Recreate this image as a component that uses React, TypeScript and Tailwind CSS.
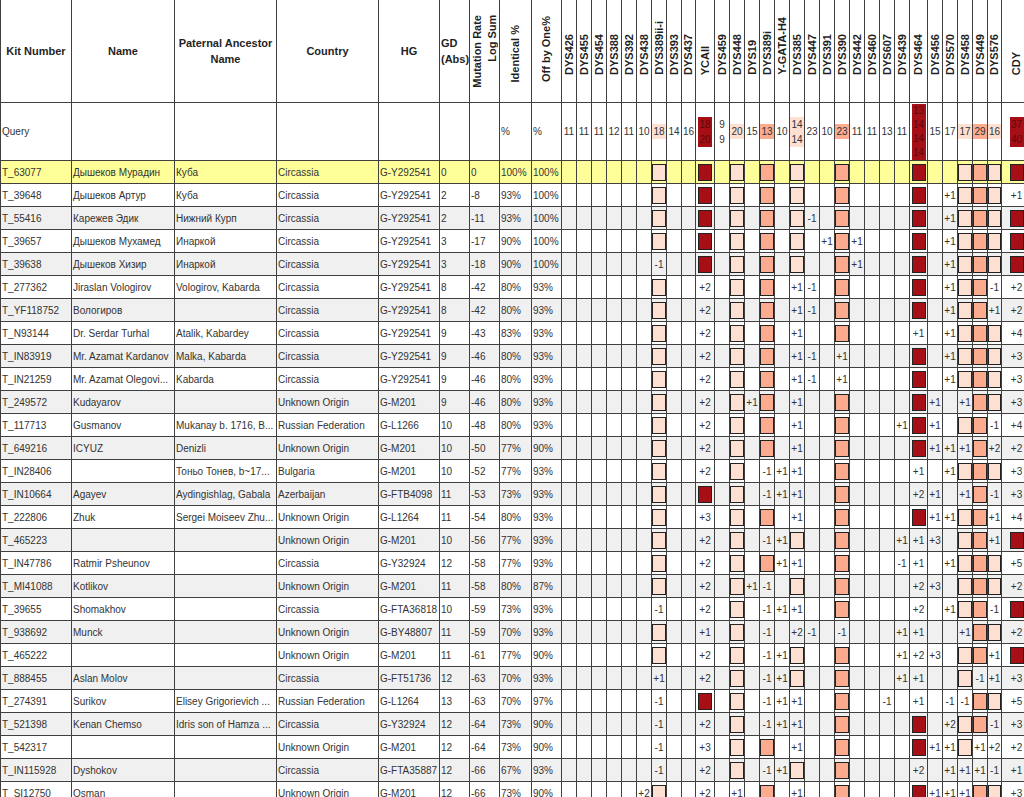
import React from 'react';

type Tone = 'L' | 'S' | 'D';

const TONE_BG: Record<Tone, string> = {
  L: 'bg-[#fee0d2]',
  S: 'bg-[#fcab8e]',
  D: 'bg-[#a50f15]',
};

type Marker = { name: string; w: string; q: string[]; tone?: Tone };

const MARKERS: Marker[] = [
  { name: 'DYS426', w: 'w-[15px]', q: ['11'] },
  { name: 'DYS455', w: 'w-[15px]', q: ['11'] },
  { name: 'DYS454', w: 'w-[15px]', q: ['11'] },
  { name: 'DYS388', w: 'w-[15px]', q: ['12'] },
  { name: 'DYS392', w: 'w-[15px]', q: ['11'] },
  { name: 'DYS438', w: 'w-[15px]', q: ['10'] },
  { name: 'DYS389ii-i', w: 'w-[15px]', q: ['18'], tone: 'L' },
  { name: 'DYS393', w: 'w-[15px]', q: ['14'] },
  { name: 'DYS437', w: 'w-[14px]', q: ['16'] },
  { name: 'YCAII', w: 'w-[19px]', q: ['18', '20'], tone: 'D' },
  { name: 'DYS459', w: 'w-[15px]', q: ['9', '9'] },
  { name: 'DYS448', w: 'w-[15px]', q: ['20'], tone: 'L' },
  { name: 'DYS19', w: 'w-[15px]', q: ['15'] },
  { name: 'DYS389i', w: 'w-[15px]', q: ['13'], tone: 'S' },
  { name: 'Y-GATA-H4', w: 'w-[15px]', q: ['10'] },
  { name: 'DYS385', w: 'w-[15px]', q: ['14', '14'], tone: 'L' },
  { name: 'DYS447', w: 'w-[15px]', q: ['23'] },
  { name: 'DYS391', w: 'w-[15px]', q: ['10'] },
  { name: 'DYS390', w: 'w-[15px]', q: ['23'], tone: 'S' },
  { name: 'DYS442', w: 'w-[15px]', q: ['11'] },
  { name: 'DYS460', w: 'w-[15px]', q: ['11'] },
  { name: 'DYS607', w: 'w-[15px]', q: ['13'] },
  { name: 'DYS439', w: 'w-[15px]', q: ['11'] },
  { name: 'DYS464', w: 'w-[18px]', q: ['13', '14', '14', '14'], tone: 'D' },
  { name: 'DYS456', w: 'w-[15px]', q: ['15'] },
  { name: 'DYS570', w: 'w-[15px]', q: ['17'] },
  { name: 'DYS458', w: 'w-[15px]', q: ['17'], tone: 'L' },
  { name: 'DYS449', w: 'w-[15px]', q: ['29'], tone: 'S' },
  { name: 'DYS576', w: 'w-[14px]', q: ['16'], tone: 'L' },
  { name: 'CDY', w: 'w-[30px]', q: ['37', '40'], tone: 'D' },
];

// markers that show a matching box unless the row says otherwise
const BASE = [6, 9, 11, 13, 15, 18, 23, 26, 27, 28, 29];

type Row = {
  kit: string;
  name: string;
  ancestor: string;
  country: string;
  hg: string;
  gd: string;
  mut: string;
  ident: string;
  off: string;
  diff: Record<number, string>;
};

const ROWS: Row[] = [
  { kit: 'T_63077', name: 'Дышеков Мурадин', ancestor: 'Куба', country: 'Circassia', hg: 'G-Y292541', gd: '0', mut: '0', ident: '100%', off: '100%', diff: {} },
  { kit: 'T_39648', name: 'Дышеков Артур', ancestor: 'Куба', country: 'Circassia', hg: 'G-Y292541', gd: '2', mut: '-8', ident: '93%', off: '100%', diff: { 25: '+1', 29: '+1' } },
  { kit: 'T_55416', name: 'Карежев Эдик', ancestor: 'Нижний Курп', country: 'Circassia', hg: 'G-Y292541', gd: '2', mut: '-11', ident: '93%', off: '100%', diff: { 16: '-1', 25: '+1' } },
  { kit: 'T_39657', name: 'Дышеков Мухамед', ancestor: 'Инаркой', country: 'Circassia', hg: 'G-Y292541', gd: '3', mut: '-17', ident: '90%', off: '100%', diff: { 17: '+1', 19: '+1', 25: '+1' } },
  { kit: 'T_39638', name: 'Дышеков Хизир', ancestor: 'Инаркой', country: 'Circassia', hg: 'G-Y292541', gd: '3', mut: '-18', ident: '90%', off: '100%', diff: { 6: '-1', 19: '+1', 25: '+1' } },
  { kit: 'T_277362', name: 'Jiraslan Vologirov', ancestor: 'Vologirov, Kabarda', country: 'Circassia', hg: 'G-Y292541', gd: '8', mut: '-42', ident: '80%', off: '93%', diff: { 9: '+2', 15: '+1', 16: '-1', 25: '+1', 28: '-1', 29: '+2' } },
  { kit: 'T_YF118752', name: 'Вологиров', ancestor: '', country: 'Circassia', hg: 'G-Y292541', gd: '8', mut: '-42', ident: '80%', off: '93%', diff: { 9: '+2', 15: '+1', 16: '-1', 25: '+1', 28: '+1', 29: '+2' } },
  { kit: 'T_N93144', name: 'Dr. Serdar Turhal', ancestor: 'Atalik, Kabardey', country: 'Circassia', hg: 'G-Y292541', gd: '9', mut: '-43', ident: '83%', off: '93%', diff: { 9: '+2', 15: '+1', 23: '+1', 25: '+1', 29: '+4' } },
  { kit: 'T_IN83919', name: 'Mr. Azamat Kardanov', ancestor: 'Malka, Kabarda', country: 'Circassia', hg: 'G-Y292541', gd: '9', mut: '-46', ident: '80%', off: '93%', diff: { 9: '+2', 15: '+1', 16: '-1', 18: '+1', 25: '+1', 29: '+3' } },
  { kit: 'T_IN21259', name: 'Mr. Azamat Olegovi...', ancestor: 'Kabarda', country: 'Circassia', hg: 'G-Y292541', gd: '9', mut: '-46', ident: '80%', off: '93%', diff: { 9: '+2', 15: '+1', 16: '-1', 18: '+1', 25: '+1', 29: '+3' } },
  { kit: 'T_249572', name: 'Kudayarov', ancestor: '', country: 'Unknown Origin', hg: 'G-M201', gd: '9', mut: '-46', ident: '80%', off: '93%', diff: { 9: '+2', 12: '+1', 15: '+1', 24: '+1', 26: '+1', 29: '+3' } },
  { kit: 'T_117713', name: 'Gusmanov', ancestor: 'Mukanay b. 1716, B...', country: 'Russian Federation', hg: 'G-L1266', gd: '10', mut: '-48', ident: '80%', off: '93%', diff: { 9: '+2', 15: '+1', 22: '+1', 24: '+1', 28: '-1', 29: '+4' } },
  { kit: 'T_649216', name: 'ICYUZ', ancestor: 'Denizli', country: 'Unknown Origin', hg: 'G-M201', gd: '10', mut: '-50', ident: '77%', off: '90%', diff: { 9: '+2', 15: '+1', 24: '+1', 25: '+1', 26: '+1', 28: '+2', 29: '+2' } },
  { kit: 'T_IN28406', name: '', ancestor: 'Тоньо Тонев, b~17...', country: 'Bulgaria', hg: 'G-M201', gd: '10', mut: '-52', ident: '77%', off: '93%', diff: { 9: '+2', 13: '-1', 14: '+1', 15: '+1', 23: '+1', 25: '+1', 29: '+3' } },
  { kit: 'T_IN10664', name: 'Agayev', ancestor: 'Aydingishlag, Gabala', country: 'Azerbaijan', hg: 'G-FTB4098', gd: '11', mut: '-53', ident: '73%', off: '93%', diff: { 13: '-1', 14: '+1', 15: '+1', 23: '+2', 24: '+1', 26: '+1', 28: '-1', 29: '+3' } },
  { kit: 'T_222806', name: 'Zhuk', ancestor: 'Sergei Moiseev Zhu...', country: 'Unknown Origin', hg: 'G-L1264', gd: '11', mut: '-54', ident: '80%', off: '93%', diff: { 9: '+3', 15: '+1', 24: '+1', 25: '+1', 28: '+1', 29: '+4' } },
  { kit: 'T_465223', name: '', ancestor: '', country: 'Unknown Origin', hg: 'G-M201', gd: '10', mut: '-56', ident: '77%', off: '93%', diff: { 9: '+2', 13: '-1', 14: '+1', 22: '+1', 23: '+1', 24: '+3', 28: '+1' } },
  { kit: 'T_IN47786', name: 'Ratmir Psheunov', ancestor: '', country: 'Circassia', hg: 'G-Y32924', gd: '12', mut: '-58', ident: '77%', off: '93%', diff: { 9: '+2', 14: '+1', 15: '+1', 22: '-1', 23: '+1', 25: '+1', 29: '+5' } },
  { kit: 'T_MI41088', name: 'Kotlikov', ancestor: '', country: 'Unknown Origin', hg: 'G-M201', gd: '11', mut: '-58', ident: '80%', off: '87%', diff: { 9: '+2', 12: '+1', 13: '-1', 23: '+2', 24: '+3', 29: '+2' } },
  { kit: 'T_39655', name: 'Shomakhov', ancestor: '', country: 'Circassia', hg: 'G-FTA36818', gd: '10', mut: '-59', ident: '73%', off: '93%', diff: { 6: '-1', 9: '+2', 13: '-1', 14: '+1', 15: '+1', 23: '+2', 25: '+1', 28: '-1' } },
  { kit: 'T_938692', name: 'Munck', ancestor: '', country: 'Unknown Origin', hg: 'G-BY48807', gd: '11', mut: '-59', ident: '70%', off: '93%', diff: { 9: '+1', 13: '-1', 15: '+2', 16: '-1', 18: '-1', 22: '+1', 23: '+1', 26: '+1', 29: '+2' } },
  { kit: 'T_465222', name: '', ancestor: '', country: 'Unknown Origin', hg: 'G-M201', gd: '11', mut: '-61', ident: '77%', off: '90%', diff: { 9: '+2', 13: '-1', 14: '+1', 22: '+1', 23: '+2', 24: '+3', 28: '+1' } },
  { kit: 'T_888455', name: 'Aslan Molov', ancestor: '', country: 'Circassia', hg: 'G-FT51736', gd: '12', mut: '-63', ident: '70%', off: '93%', diff: { 6: '+1', 9: '+2', 13: '-1', 14: '+1', 22: '+1', 23: '+1', 27: '-1', 28: '+1', 29: '+3' } },
  { kit: 'T_274391', name: 'Surikov', ancestor: 'Elisey Grigorievich ...', country: 'Russian Federation', hg: 'G-L1264', gd: '13', mut: '-63', ident: '70%', off: '97%', diff: { 6: '-1', 13: '-1', 14: '+1', 15: '+1', 21: '-1', 23: '+1', 25: '-1', 26: '-1', 29: '+5' } },
  { kit: 'T_521398', name: 'Kenan Chemso', ancestor: 'Idris son of Hamza ...', country: 'Circassia', hg: 'G-Y32924', gd: '12', mut: '-64', ident: '73%', off: '90%', diff: { 6: '-1', 9: '+2', 13: '-1', 14: '+1', 15: '+1', 25: '+2', 28: '-1', 29: '+3' } },
  { kit: 'T_542317', name: '', ancestor: '', country: 'Unknown Origin', hg: 'G-M201', gd: '12', mut: '-64', ident: '73%', off: '90%', diff: { 6: '-1', 9: '+3', 15: '+1', 24: '+1', 25: '+1', 27: '+1', 28: '+2', 29: '+2' } },
  { kit: 'T_IN115928', name: 'Dyshokov', ancestor: '', country: 'Circassia', hg: 'G-FTA35887', gd: '12', mut: '-66', ident: '67%', off: '93%', diff: { 6: '-1', 9: '+2', 13: '-1', 14: '+1', 23: '+2', 25: '+1', 26: '+1', 27: '+1', 28: '-1', 29: '+1' } },
  { kit: 'T_SI12750', name: 'Osman', ancestor: '', country: 'Unknown Origin', hg: 'G-M201', gd: '12', mut: '-66', ident: '73%', off: '90%', diff: { 5: '+2', 9: '+2', 11: '+1', 15: '+1', 24: '+1', 25: '+1', 26: '+1', 29: '+3' } },
];

const LINE = 'border-[#404040]';

function Cell({ className = '', children }: { className?: string; children?: React.ReactNode }) {
  return (
    <div className={`h-full shrink-0 flex items-center overflow-hidden border-r border-b ${LINE} ${className}`}>
      {children}
    </div>
  );
}

function Vertical({ children, className = '' }: { children: React.ReactNode; className?: string }) {
  return <span className={`[writing-mode:vertical-rl] rotate-180 whitespace-nowrap ${className}`}>{children}</span>;
}

function HeaderRow() {
  return (
    <div className="flex h-[103px] bg-white font-bold text-[11px] text-[#1f1f1f]">
      <Cell className="w-[72px] border-l justify-center">Kit Number</Cell>
      <Cell className="w-[103px] justify-center">Name</Cell>
      <Cell className="w-[102px] justify-center text-center leading-[16px]">
        Paternal Ancestor
        <br />
        Name
      </Cell>
      <Cell className="w-[102px] justify-center">Country</Cell>
      <Cell className="w-[61px] justify-center">HG</Cell>
      <Cell className="w-[30px] pl-px leading-[16px]">
        GD
        <br />
        (Abs)
      </Cell>
      <Cell className="w-[30px] items-end justify-center pb-[14px]">
        <Vertical className="text-end leading-[15px]">
          Mutation Rate
          <br />
          Log Sum
        </Vertical>
      </Cell>
      <Cell className="w-[32px] items-end justify-center pb-[20px]">
        <Vertical>Identical %</Vertical>
      </Cell>
      <Cell className="w-[30px] items-end justify-center pb-[20px]">
        <Vertical>Off by One%</Vertical>
      </Cell>
      {MARKERS.map((m) => (
        <Cell key={m.name} className={`${m.w} items-end justify-center pb-[27px]`}>
          <Vertical>{m.name}</Vertical>
        </Cell>
      ))}
    </div>
  );
}

function QueryRow() {
  return (
    <div className="flex h-[58px] bg-white text-[10px] text-[#333]">
      <Cell className="w-[72px] border-l pl-px">Query</Cell>
      <Cell className="w-[103px]" />
      <Cell className="w-[102px]" />
      <Cell className="w-[102px]" />
      <Cell className="w-[61px]" />
      <Cell className="w-[30px]" />
      <Cell className="w-[30px]" />
      <Cell className="w-[32px] pl-px">%</Cell>
      <Cell className="w-[30px] pl-px">%</Cell>
      {MARKERS.map((m) => (
        <Cell key={m.name} className={`${m.w} justify-center`}>
          <div
            className={`w-[14px] text-center ${m.q.length > 3 ? 'leading-[14px]' : 'leading-[15px]'} ${
              m.tone ? TONE_BG[m.tone] : ''
            } ${m.tone === 'D' ? 'text-[#5e0a0d]' : ''}`}
          >
            {m.q.map((v, i) => (
              <div key={i}>{v}</div>
            ))}
          </div>
        </Cell>
      ))}
    </div>
  );
}

function DataRow({ row, index }: { row: Row; index: number }) {
  const bg = index === 0 ? 'bg-[#ffff99]' : index % 2 === 1 ? 'bg-white' : 'bg-[#f0f0f0]';
  const cells = MARKERS.map((_, i) => (i in row.diff ? row.diff[i] : BASE.includes(i) ? 'B' : ''));

  return (
    <div className={`flex h-[23px] text-[10px] text-[#333] ${bg}`}>
      <Cell className="w-[72px] border-l pl-px">{row.kit}</Cell>
      <Cell className="w-[103px] pl-px whitespace-nowrap">{row.name}</Cell>
      <Cell className="w-[102px] pl-px whitespace-nowrap">{row.ancestor}</Cell>
      <Cell className="w-[102px] pl-px whitespace-nowrap">{row.country}</Cell>
      <Cell className="w-[61px] pl-px whitespace-nowrap">{row.hg}</Cell>
      <Cell className="w-[30px] pl-px">{row.gd}</Cell>
      <Cell className="w-[30px] pl-px">{row.mut}</Cell>
      <Cell className="w-[32px] pl-px">{row.ident}</Cell>
      <Cell className="w-[30px] pl-px">{row.off}</Cell>
      {MARKERS.map((m, i) => (
        <Cell key={m.name} className={`${m.w} justify-center`}>
          {cells[i] === 'B' && m.tone ? (
            <div className={`w-[14px] h-[17px] border border-[#222] ${TONE_BG[m.tone]}`} />
          ) : (
            <span className="whitespace-nowrap">{cells[i]}</span>
          )}
        </Cell>
      ))}
    </div>
  );
}

export default function App() {
  return (
    <div className="h-screen w-screen overflow-hidden bg-white font-['Liberation_Sans',Arial,sans-serif]">
      <div className="w-max">
        <HeaderRow />
        <QueryRow />
        {ROWS.map((row, i) => (
          <DataRow key={row.kit} row={row} index={i} />
        ))}
      </div>
    </div>
  );
}
